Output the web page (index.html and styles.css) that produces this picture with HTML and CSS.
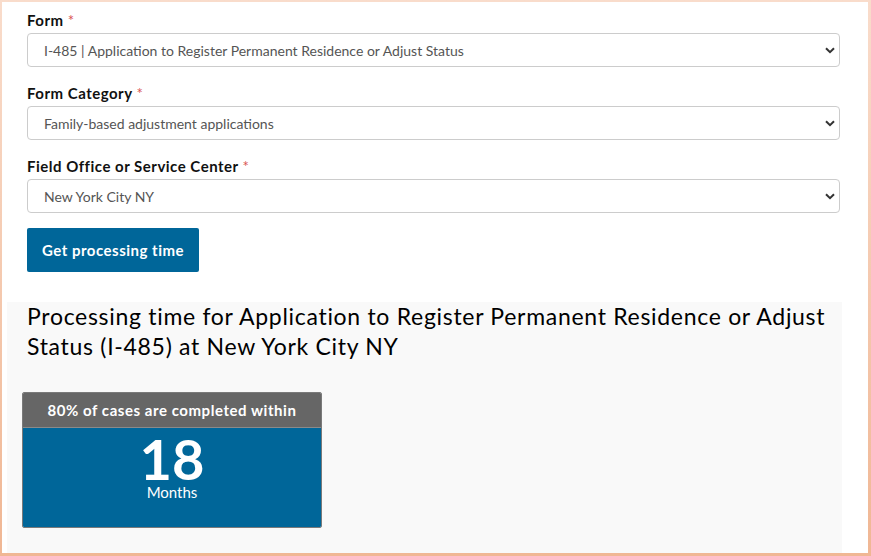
FILE: index.html
```html
<!DOCTYPE html>
<html lang="en">
<head>
    <meta charset="UTF-8">
    <meta name="viewport" content="width=device-width, initial-scale=1.0">
    <title>Check Case Processing Times</title>
    <link rel="stylesheet" href="styles.css">
</head>
<body>
    <div class="frame">
        <div class="page">
            <form class="search">
                <label class="field-label" for="form">Form <span class="req">*</span></label>
                <div class="select-wrap">
                    <select id="form" class="select">
                        <option>I-485 | Application to Register Permanent Residence or Adjust Status</option>
                    </select>
                    <svg class="chev" width="10" height="7" viewBox="0 0 10 7"><path d="M1 1.2 5 5.2 9 1.2" fill="none" stroke="#333" stroke-width="2"/></svg>
                </div>

                <label class="field-label" for="category">Form Category <span class="req">*</span></label>
                <div class="select-wrap">
                    <select id="category" class="select">
                        <option>Family-based adjustment applications</option>
                    </select>
                    <svg class="chev" width="10" height="7" viewBox="0 0 10 7"><path d="M1 1.2 5 5.2 9 1.2" fill="none" stroke="#333" stroke-width="2"/></svg>
                </div>

                <label class="field-label" for="office">Field Office or Service Center <span class="req">*</span></label>
                <div class="select-wrap">
                    <select id="office" class="select">
                        <option>New York City NY</option>
                    </select>
                    <svg class="chev" width="10" height="7" viewBox="0 0 10 7"><path d="M1 1.2 5 5.2 9 1.2" fill="none" stroke="#333" stroke-width="2"/></svg>
                </div>

                <button type="button" class="btn">Get processing time</button>
            </form>

            <section class="result">
                <h2 class="result-title">Processing time for Application to Register Permanent Residence or Adjust Status (I-485) at New York City NY</h2>
                <div class="card">
                    <div class="card-head">80% of cases are completed within</div>
                    <div class="card-body">
                        <div class="num">18</div>
                        <div class="unit">Months</div>
                    </div>
                </div>
            </section>
        </div>
    </div>
</body>
</html>
```

FILE: styles.css
```css
html, body {
    margin: 0;
    padding: 0;
}
body {
    font-family: Lato, "Open Sans", Arial, sans-serif;
    color: #1b1b1b;
}
.frame {
    height: 556px;
    box-sizing: border-box;
    padding: 2px 3px 3px 2px;
    background: linear-gradient(#f9dccb, #f0b794);
}
.page {
    height: 100%;
    background: #fff;
    overflow: hidden;
}
.search {
    padding: 8px 28px 0 25px;
}
.field-label {
    display: block;
    font-size: 15px;
    font-weight: 700;
    line-height: 20px;
    letter-spacing: 0.5px;
    margin-bottom: 3px;
    color: #111;
}
.req {
    color: #d9534f;
    font-weight: 400;
}
.select-wrap {
    position: relative;
    margin-bottom: 16px;
}
.select {
    display: block;
    width: 100%;
    height: 34px;
    -webkit-appearance: none;
    appearance: none;
    background: #fff;
    border: 1px solid #ccc;
    border-radius: 4px;
    padding: 0 30px 0 16px;
    font-family: inherit;
    font-size: 14px;
    color: #555;
}
.chev {
    position: absolute;
    right: 5px;
    top: 14px;
}
.btn {
    margin-top: -1px;
    height: 44px;
    padding: 0 15px;
    background: #006699;
    color: #fff;
    border: none;
    border-radius: 2px;
    font-family: inherit;
    font-size: 15px;
    font-weight: 700;
    letter-spacing: 0.5px;
}
.result {
    display: flow-root;
    margin: 30px 0 0 5px;
    width: 835px;
    height: 260px;
    background: #f9f9f9;
    padding: 0 0 0 15px;
    box-sizing: border-box;
}
.result-title {
    margin: -1px 0 31px 5px;
    font-size: 23px;
    font-weight: 400;
    line-height: 30px;
    letter-spacing: 0.7px;
    color: #000;
}
.card {
    width: 300px;
    border: 1px solid #7a7a7a;
    border-radius: 2px;
    overflow: hidden;
    box-sizing: border-box;
    text-align: center;
    color: #fff;
}
.card-head {
    background: #666;
    height: 34px;
    line-height: 34px;
    font-size: 15px;
    font-weight: 700;
    letter-spacing: 0.55px;
    border-bottom: 1px solid #8a8a8a;
}
.card-body {
    background: #006699;
    height: 99px;
}
.num {
    font-size: 56px;
    font-weight: 700;
    line-height: 48px;
    padding-top: 7px;
}
.unit {
    font-size: 15px;
    line-height: 18px;
}
```
